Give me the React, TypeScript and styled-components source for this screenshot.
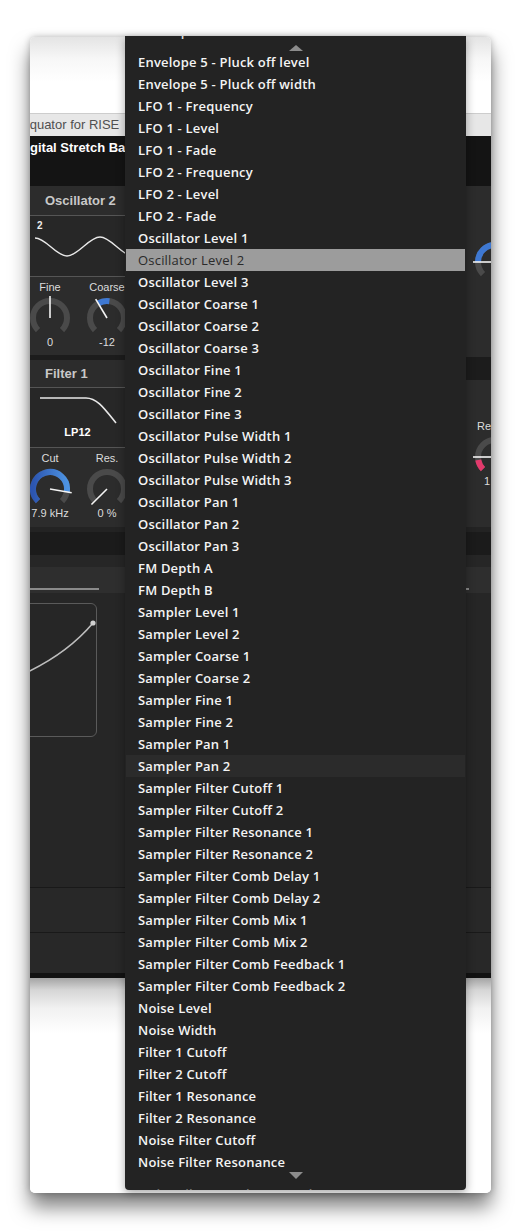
import React from 'react'
import styled, { createGlobalStyle, css } from 'styled-components'

const GlobalStyle = createGlobalStyle`
  html, body {
    margin: 0;
    padding: 0;
    background: #fff;
  }
  body {
    font-family: "Liberation Sans", Arial, sans-serif;
  }
`

const ITEMS = [
  'Envelope 5 - Pluck off level',
  'Envelope 5 - Pluck off width',
  'LFO 1 - Frequency',
  'LFO 1 - Level',
  'LFO 1 - Fade',
  'LFO 2 - Frequency',
  'LFO 2 - Level',
  'LFO 2 - Fade',
  'Oscillator Level 1',
  'Oscillator Level 2',
  'Oscillator Level 3',
  'Oscillator Coarse 1',
  'Oscillator Coarse 2',
  'Oscillator Coarse 3',
  'Oscillator Fine 1',
  'Oscillator Fine 2',
  'Oscillator Fine 3',
  'Oscillator Pulse Width 1',
  'Oscillator Pulse Width 2',
  'Oscillator Pulse Width 3',
  'Oscillator Pan 1',
  'Oscillator Pan 2',
  'Oscillator Pan 3',
  'FM Depth A',
  'FM Depth B',
  'Sampler Level 1',
  'Sampler Level 2',
  'Sampler Coarse 1',
  'Sampler Coarse 2',
  'Sampler Fine 1',
  'Sampler Fine 2',
  'Sampler Pan 1',
  'Sampler Pan 2',
  'Sampler Filter Cutoff 1',
  'Sampler Filter Cutoff 2',
  'Sampler Filter Resonance 1',
  'Sampler Filter Resonance 2',
  'Sampler Filter Comb Delay 1',
  'Sampler Filter Comb Delay 2',
  'Sampler Filter Comb Mix 1',
  'Sampler Filter Comb Mix 2',
  'Sampler Filter Comb Feedback 1',
  'Sampler Filter Comb Feedback 2',
  'Noise Level',
  'Noise Width',
  'Filter 1 Cutoff',
  'Filter 2 Cutoff',
  'Filter 1 Resonance',
  'Filter 2 Resonance',
  'Noise Filter Cutoff',
  'Noise Filter Resonance',
]

const SELECTED = 'Oscillator Level 2'
const HOVERED = 'Sampler Pan 2'

// ---- page / window ----

const Page = styled.div`
  padding: 37px 0 0 30px;
  height: 1231px;
  box-sizing: border-box;
`

const Stage = styled.div`
  position: relative;
  width: 461px;
`

const Window = styled.div`
  width: 461px;
  height: 1156px;
  border-radius: 5px;
  overflow: hidden;
  background: #fff;
  box-shadow: 0 14px 20px rgba(0, 0, 0, 0.5), 0 0 7px rgba(0, 0, 0, 0.25);
  display: flex;
  flex-direction: column;
`

const TitleBar = styled.div`
  height: 77px;
  box-sizing: border-box;
  border-bottom: 1px solid #cdcdcd;
  background: linear-gradient(#e4e4e4, #f7f7f7 22px, #fff 45px);
`

const TabStrip = styled.div`
  height: 22px;
  background: #e7e7e7;
  color: #505050;
  font-size: 13px;
  line-height: 22px;
  white-space: nowrap;
  overflow: hidden;
  text-indent: -9px;
`

const PluginHeader = styled.div`
  height: 50px;
  background: #141414;
  color: #fff;
  font-size: 13px;
  font-weight: 700;
  line-height: 16px;
  padding-top: 4px;
  box-sizing: border-box;
  white-space: nowrap;
  overflow: hidden;
  text-indent: -13px;
`

// ---- synth body ----

const Body = styled.div`
  height: 341px;
  display: flex;
`

const Column = styled.div<{ $w?: number }>`
  display: flex;
  flex-direction: column;
  overflow: hidden;
  ${p => (p.$w ? css`width: ${p.$w}px;` : css`flex: 1;`)}
`

const Panel = styled.div<{ $h: number; $pad?: number }>`
  height: ${p => p.$h}px;
  background: #2c2c2c;
  box-sizing: border-box;
  padding-top: ${p => p.$pad ?? 0}px;
  display: flex;
  flex-direction: column;
`

const ColumnGap = styled.div<{ $h: number }>`
  height: ${p => p.$h}px;
  background: #1c1c1c;
`

const PanelTitle = styled.div<{ $h: number }>`
  height: ${p => p.$h}px;
  box-sizing: border-box;
  border-bottom: 1px solid #555;
  padding-left: 15px;
  display: flex;
  align-items: center;
  color: #c8c8c8;
  font-size: 13px;
  font-weight: 700;
  white-space: nowrap;
`

const GraphArea = styled.div<{ $h: number }>`
  height: ${p => p.$h}px;
  box-sizing: border-box;
  border-bottom: 1px solid #555;
  background: #272727;
  display: flex;
  flex-direction: column;
`

const WaveIndex = styled.div`
  height: 17px;
  padding: 4px 0 0 7px;
  box-sizing: border-box;
  color: #eee;
  font-size: 10px;
  font-weight: 700;
  line-height: 12px;
`

const GraphLabel = styled.div`
  text-align: center;
  width: 95px;
  color: #fff;
  font-size: 11px;
  font-weight: 700;
  line-height: 13px;
`

const KnobGrid = styled.div<{ $top: number }>`
  display: grid;
  grid-template-columns: repeat(2, 57px);
  margin-left: -8.5px;
  padding-top: ${p => p.$top}px;
`

const KnobCell = styled.div`
  display: flex;
  flex-direction: column;
  align-items: center;
`

const KnobText = styled.div`
  color: #dcdcdc;
  font-size: 11px;
  line-height: 13px;
  white-space: nowrap;
`

const KnobSvg = styled.svg`
  display: block;
  margin: 2px 0 0;
`

const SideCell = styled.div<{ $left: number }>`
  display: flex;
  flex-direction: column;
  align-items: flex-start;
  padding-left: ${p => p.$left}px;
  width: 60px;
`

// ---- lower sections ----

const SectionGap = styled.div`
  height: 28px;
  box-sizing: border-box;
  background: #1b1b1b;
  border-top: 5px solid #232323;
`

const TabBand = styled.div`
  height: 38px;
  box-sizing: border-box;
  background: linear-gradient(#262626 0 12px, #2e2e2e 12px);
  display: flex;
  align-items: flex-end;
  padding-bottom: 3px;
`

const TabLine = styled.div<{ $w: number; $end?: boolean }>`
  width: ${p => p.$w}px;
  height: 2px;
  background: #8a8a8a;
  ${p => p.$end && css`margin: 0 22px 0 auto;`}
`

const EnvArea = styled.div`
  height: 294px;
  background: #262626;
  padding-top: 10px;
  box-sizing: border-box;
`

const EnvBox = styled.div`
  width: 77px;
  height: 134px;
  margin-left: -10px;
  box-sizing: border-box;
  border: 1px solid #5a5a5a;
  border-radius: 6px;
`

const FooterRow = styled.div<{ $h: number }>`
  height: ${p => p.$h}px;
  box-sizing: border-box;
  border-top: 1px solid #191919;
  background: #282828;
`

const BlackStrip = styled.div`
  height: 5px;
  background: #121212;
`

const HostArea = styled.div`
  flex: 1;
  background: linear-gradient(#a4a4a4, #d6d6d6 12px, #f1f1f1 30px, #fff 55px);
`

// ---- dropdown menu ----

const Menu = styled.div`
  position: absolute;
  top: -1px;
  left: 95px;
  width: 341px;
  height: 1154px;
  background: #232323;
  border-radius: 0 0 4px 4px;
  box-shadow: 0 3px 10px rgba(0, 0, 0, 0.35);
  overflow: hidden;
  display: flex;
  flex-direction: column;
  font-family: "Open Sans", "Liberation Sans", sans-serif;
`

const Peek = styled.div<{ $h: number }>`
  height: ${p => p.$h}px;
  overflow: hidden;
  flex-shrink: 0;
`

const Item = styled.div<{ $state?: 'selected' | 'hover' }>`
  height: 22px;
  line-height: 22px;
  margin: 0 1px;
  padding-left: 12px;
  font-size: 13px;
  font-weight: 600;
  letter-spacing: 0.2px;
  color: #f4f4f4;
  white-space: nowrap;
  flex-shrink: 0;
  ${p =>
    p.$state === 'selected' &&
    css`
      background: #9c9c9c;
      color: #2a2a2a;
      font-weight: 400;
    `}
  ${p =>
    p.$state === 'hover' &&
    css`
      background: #2b2b2b;
    `}
`

const GhostItem = styled(Item)<{ $shift: number }>`
  margin-top: ${p => p.$shift}px;
  color: #777;
`

const ArrowZone = styled.div<{ $h: number }>`
  height: ${p => p.$h}px;
  flex-shrink: 0;
  display: flex;
  justify-content: center;
`

const Arrow = styled.div<{ $down?: boolean }>`
  width: 0;
  height: 0;
  border-left: 7.5px solid transparent;
  border-right: 7.5px solid transparent;
  ${p =>
    p.$down
      ? css`
          border-top: 7px solid #8c8c8c;
          margin-top: -1px;
        `
      : css`
          border-bottom: 6px solid #8c8c8c;
          margin-top: 3px;
        `}
`

// ---- drawing helpers ----

const polar = (cx: number, cy: number, r: number, deg: number) => {
  const a = (deg * Math.PI) / 180
  return [cx + r * Math.sin(a), cy - r * Math.cos(a)]
}

const arc = (cx: number, cy: number, r: number, from: number, to: number) => {
  const [x1, y1] = polar(cx, cy, r, from)
  const [x2, y2] = polar(cx, cy, r, to)
  const large = Math.abs(to - from) > 180 ? 1 : 0
  const sweep = to > from ? 1 : 0
  return `M${x1.toFixed(2)} ${y1.toFixed(2)} A${r} ${r} 0 ${large} ${sweep} ${x2.toFixed(2)} ${y2.toFixed(2)}`
}

type KnobProps = {
  pointer: number
  fill?: [number, number]
  color?: string
  gradient?: boolean
}

const Knob = ({ pointer, fill, color = '#3e78d2', gradient }: KnobProps) => {
  const [px, py] = polar(23, 22, 22, pointer)
  const id = `kg${pointer}`
  return (
    <KnobSvg width={46} height={40} viewBox="0 0 46 40">
      {gradient && (
        <defs>
          <linearGradient id={id} x1="0" y1="0" x2="1" y2="0">
            <stop offset="0" stopColor="#2c55b0" />
            <stop offset="1" stopColor="#4d93e2" />
          </linearGradient>
        </defs>
      )}
      <path d={arc(23, 22, 17, -135, 135)} stroke="#4a4a4a" strokeWidth={6} fill="none" />
      {fill && (
        <path
          d={arc(23, 22, 17, fill[0], fill[1])}
          stroke={gradient ? `url(#${id})` : color}
          strokeWidth={6}
          fill="none"
        />
      )}
      <line x1={23} y1={22} x2={px} y2={py} stroke="#f4f4f4" strokeWidth={1.6} />
    </KnobSvg>
  )
}

const SineWave = () => (
  <svg width={100} height={43} viewBox="0 0 100 43" style={{ display: 'block' }}>
    <path
      d="M5 5 C 16 5, 26 23, 37 23 S 59 4, 70 4 S 92 23, 103 23"
      stroke="#e8e8e8"
      strokeWidth={1.4}
      fill="none"
    />
  </svg>
)

const FilterCurve = () => (
  <svg width={100} height={38} viewBox="0 0 100 38" style={{ display: 'block' }}>
    <path d="M10 10 H56 C 67 10, 74 20, 86 35" stroke="#e8e8e8" strokeWidth={1.6} fill="none" />
  </svg>
)

const EnvCurve = () => (
  <svg width={77} height={134} viewBox="0 0 77 134" style={{ display: 'block', marginTop: -1 }}>
    <path d="M0 72 Q 45 52, 72 20" stroke="#bdbdbd" strokeWidth={1.6} fill="none" />
    <circle cx={72} cy={20} r={2.6} fill="#d0d0d0" />
  </svg>
)

const DropdownMenu = () => (
  <Menu>
    <Peek $h={6}>
      <GhostItem $shift={-16} style={{ color: '#dcdcdc' }}>
        Envelope 5 - Release
      </GhostItem>
    </Peek>
    <ArrowZone $h={9}>
      <Arrow />
    </ArrowZone>
    {ITEMS.map(name => (
      <Item
        key={name}
        $state={name === SELECTED ? 'selected' : name === HOVERED ? 'hover' : undefined}
      >
        {name}
      </Item>
    ))}
    <ArrowZone $h={10}>
      <Arrow $down />
    </ArrowZone>
    <Peek $h={7}>
      <GhostItem $shift={0}>Noise Filter Envelope Depth</GhostItem>
    </Peek>
  </Menu>
)

export default function App() {
  return (
    <>
      <GlobalStyle />
      <Page>
        <Stage>
          <Window>
            <TitleBar />
            <TabStrip>Equator for RISE</TabStrip>
            <PluginHeader>Digital Stretch Bass</PluginHeader>

            <Body>
              <Column $w={95}>
                <Panel $h={169}>
                  <PanelTitle $h={30}>Oscillator 2</PanelTitle>
                  <GraphArea $h={61}>
                    <WaveIndex>2</WaveIndex>
                    <SineWave />
                  </GraphArea>
                  <KnobGrid $top={4}>
                    <KnobCell>
                      <KnobText>Fine</KnobText>
                      <Knob pointer={0} />
                      <KnobText>0</KnobText>
                    </KnobCell>
                    <KnobCell>
                      <KnobText>Coarse</KnobText>
                      <Knob pointer={-31} fill={[-31, 8]} />
                      <KnobText>-12</KnobText>
                    </KnobCell>
                  </KnobGrid>
                </Panel>
                <ColumnGap $h={5} />
                <Panel $h={167}>
                  <PanelTitle $h={28}>Filter 1</PanelTitle>
                  <GraphArea $h={60}>
                    <FilterCurve />
                    <GraphLabel>LP12</GraphLabel>
                  </GraphArea>
                  <KnobGrid $top={4}>
                    <KnobCell>
                      <KnobText>Cut</KnobText>
                      <Knob pointer={100} fill={[-135, 100]} gradient />
                      <KnobText>7.9 kHz</KnobText>
                    </KnobCell>
                    <KnobCell>
                      <KnobText>Res.</KnobText>
                      <Knob pointer={-135} />
                      <KnobText>0 %</KnobText>
                    </KnobCell>
                  </KnobGrid>
                </Panel>
              </Column>

              <Column>
                <Panel $h={341} />
              </Column>

              <Column $w={25}>
                <Panel $h={171} $pad={52}>
                  <SideCell $left={6}>
                    <Knob pointer={-90} fill={[-90, 0]} />
                  </SideCell>
                </Panel>
                <ColumnGap $h={23} />
                <Panel $h={147} $pad={40}>
                  <SideCell $left={11}>
                    <KnobText>Res.</KnobText>
                  </SideCell>
                  <SideCell $left={6}>
                    <Knob pointer={-90} fill={[-135, -100]} color="#e23a6c" />
                  </SideCell>
                  <SideCell $left={18}>
                    <KnobText>1 %</KnobText>
                  </SideCell>
                </Panel>
              </Column>
            </Body>

            <SectionGap />
            <TabBand>
              <TabLine $w={69} />
              <TabLine $w={3} $end />
            </TabBand>
            <EnvArea>
              <EnvBox>
                <EnvCurve />
              </EnvBox>
            </EnvArea>
            <FooterRow $h={45} />
            <FooterRow $h={41} />
            <BlackStrip />
            <HostArea />
          </Window>
          <DropdownMenu />
        </Stage>
      </Page>
    </>
  )
}
